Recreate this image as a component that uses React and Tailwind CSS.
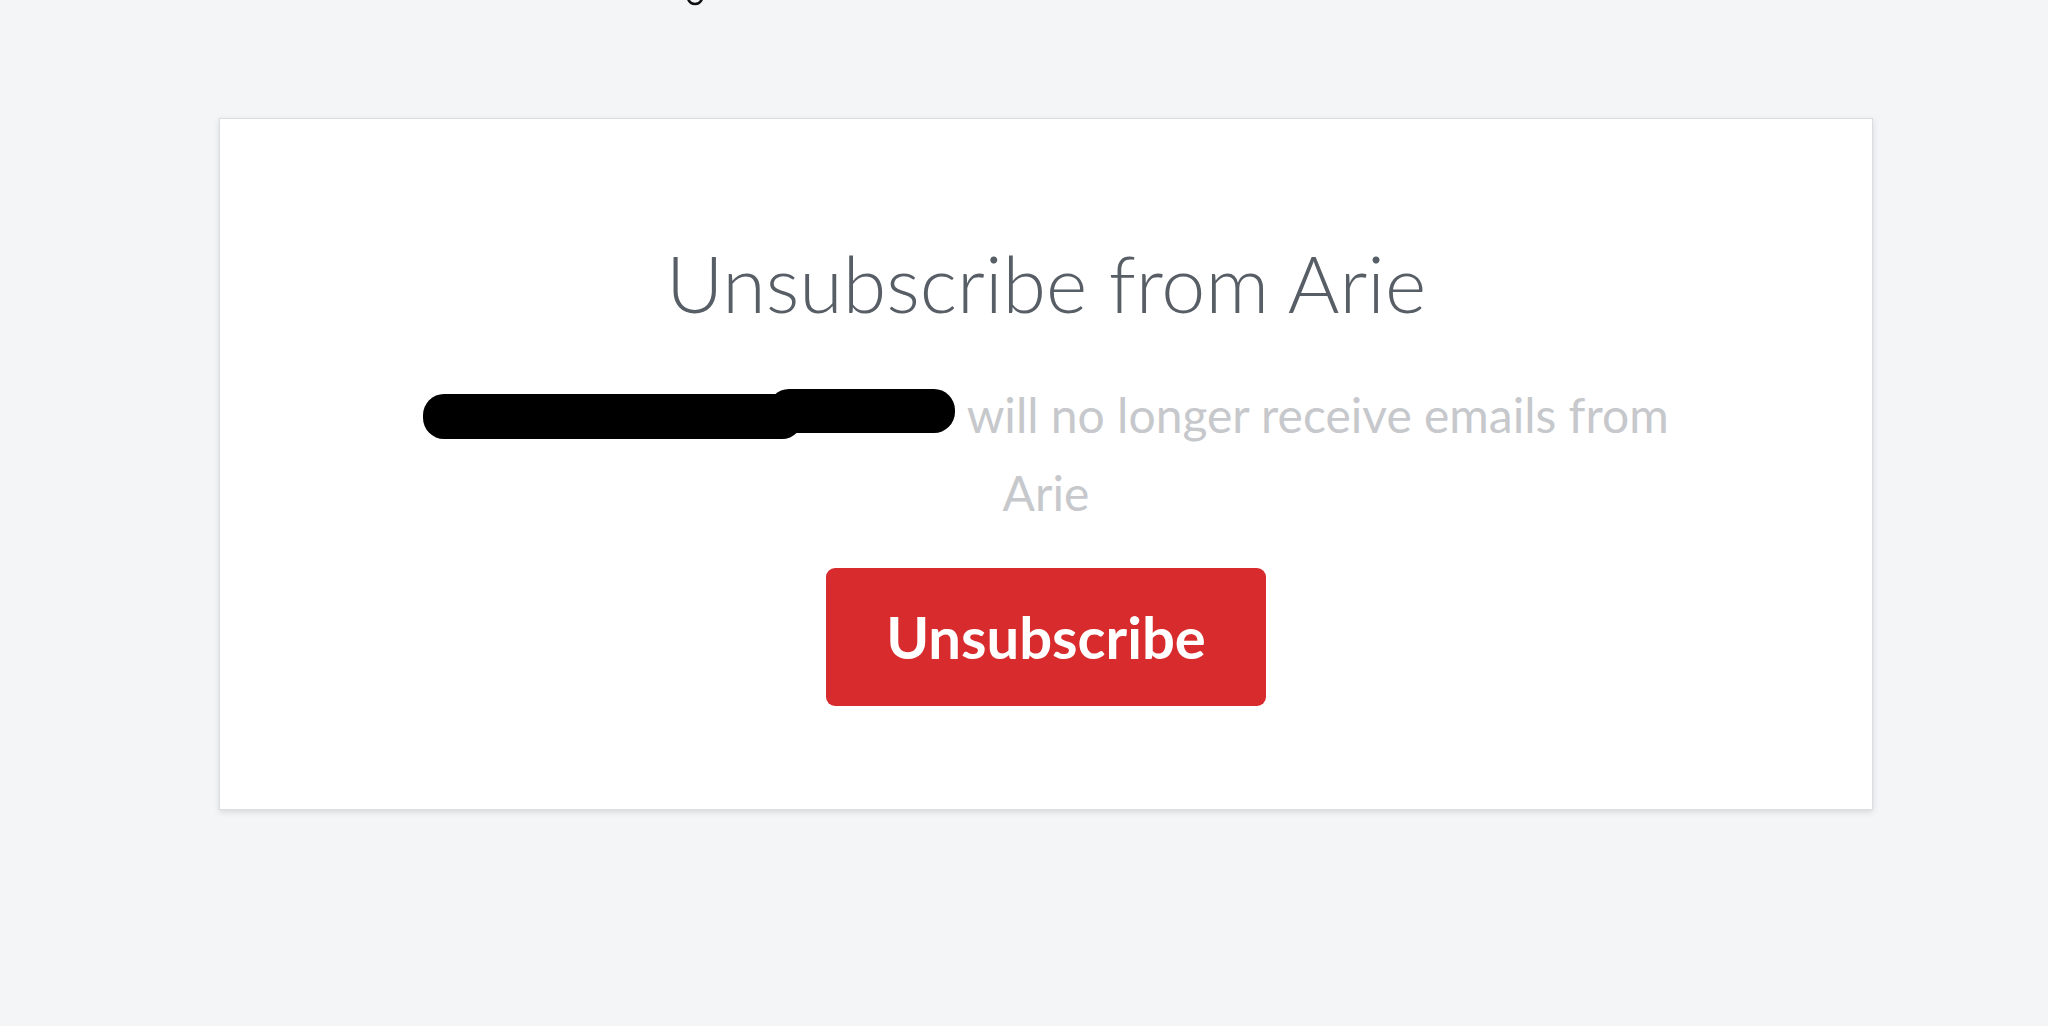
// Unsubscribe confirmation page
export default function App() {
  return (
    <div className="relative min-h-screen bg-[#f4f5f7] pt-[118px] font-['Lato','Open_Sans',sans-serif]">
      {/* descender of a cut-off heading at the very top */}
      <svg className="absolute left-[686px] top-0" width="18" height="6" viewBox="0 0 18 6">
        <path d="M2 -1 Q4 4 9 4 Q14 4 16 -1" fill="none" stroke="#111" strokeWidth="2.5" />
      </svg>

      <div className="ml-[219px] flex h-[692px] w-[1654px] flex-col items-center border border-[#dcdde0] bg-white pt-[117px] shadow-[0_2px_6px_rgba(0,0,0,0.12)]">
        <h1 className="text-[79px] font-light leading-[1.2] text-[#585e66]">Unsubscribe from Arie</h1>

        <p className="mt-[45px] text-center text-[48px] leading-[78px] text-[#c6c8cc]">
          <svg className="inline-block align-[-6px]" width="532" height="50" viewBox="0 0 532 50">
            <rect x="0" y="5" width="380" height="45" rx="21" fill="#000" />
            <rect x="345" y="0" width="187" height="44" rx="21" fill="#000" />
          </svg>{" "}
          will no longer receive emails from
          <br />
          Arie
        </p>

        <button className="mt-[36px] flex h-[138px] w-[440px] items-center justify-center rounded-[9px] bg-[#d72b2d] text-[58px] font-bold text-white">
          Unsubscribe
        </button>
      </div>
    </div>
  );
}
